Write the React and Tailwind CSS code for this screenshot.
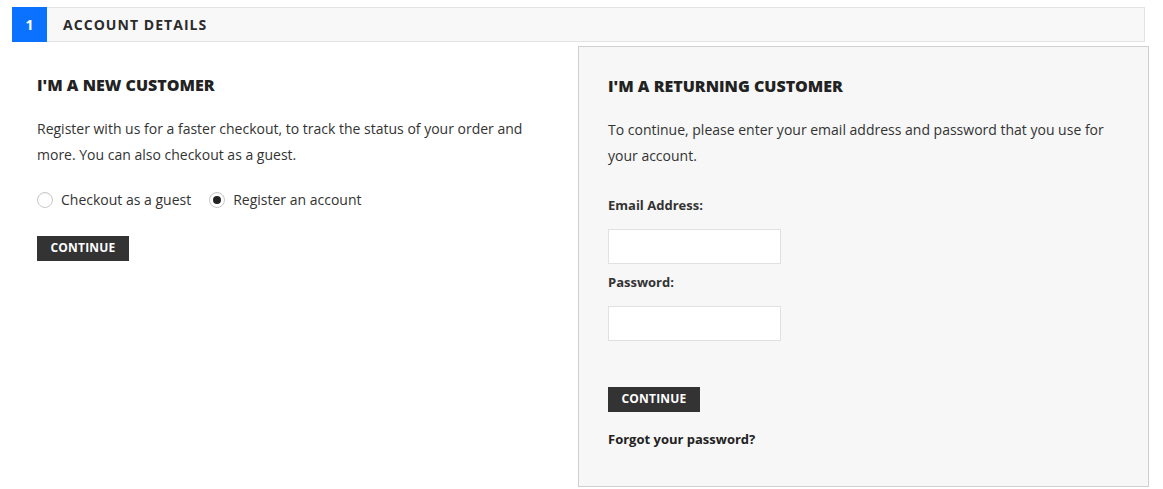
import React from 'react';

const font = { fontFamily: '"Open Sans", Arial, sans-serif' };

function Radio({ checked, label }) {
  return (
    <label className="flex items-center gap-[8px] cursor-pointer">
      <span className="w-[16px] h-[16px] rounded-full border border-[#c8c8c8] bg-white flex items-center justify-center shadow-[inset_0_1px_1px_rgba(0,0,0,0.05)]">
        {checked && <span className="w-[8px] h-[8px] rounded-full bg-[#222]" />}
      </span>
      <span>{label}</span>
    </label>
  );
}

function DarkButton({ children }) {
  return (
    <button className="h-[25px] w-[92px] bg-[#333333] text-white text-[12px] font-bold tracking-[0.2px] uppercase">
      {children}
    </button>
  );
}

export default function App() {
  return (
    <div className="bg-white text-[#333] w-[1163px] h-[489px] px-[12px] pt-[7px]" style={font}>
      {/* step header */}
      <div className="flex h-[35px] w-[1133px] border border-[#e3e3e3] bg-[#f8f8f8]">
        <div className="w-[35px] -ml-px -mt-px h-[35px] bg-[#0a72ff] text-white text-[14px] font-bold flex items-center justify-center">
          1
        </div>
        <div className="pl-[16px] flex items-center text-[14px] font-bold tracking-[1.05px] uppercase text-[#2b2b2b]">
          Account Details
        </div>
      </div>

      <div className="flex mt-[4px]">
        {/* new customer */}
        <div className="w-[566px] pl-[25px] pt-[28px]">
          <h2 className="text-[16px] font-extrabold uppercase leading-[22px] text-[#222]">I'm a new customer</h2>
          <p className="text-[14px] leading-[26px] mt-[20px] pr-[30px]">
            Register with us for a faster checkout, to track the status of your order and more. You can also checkout as a guest.
          </p>
          <div className="flex items-center gap-[18px] text-[14px] mt-[21px]">
            <Radio label="Checkout as a guest" />
            <Radio checked label="Register an account" />
          </div>
          <div className="mt-[24px]">
            <DarkButton>Continue</DarkButton>
          </div>
        </div>

        {/* returning customer */}
        <div className="w-[571px] h-[441px] border border-[#cfcfcf] bg-[#f7f7f7] pl-[29px] pt-[28px]">
          <h2 className="text-[16px] font-extrabold uppercase leading-[22px] text-[#222]">I'm a returning customer</h2>
          <p className="text-[14px] leading-[26px] mt-[20px] pr-[40px]">
            To continue, please enter your email address and password that you use for your account.
          </p>
          <div className="text-[13px] font-bold mt-[27px] leading-[18px]">Email Address:</div>
          <input type="email" className="block mt-[15px] w-[173px] h-[35px] bg-white border border-[#e1e1e1] outline-none" />
          <div className="text-[13px] font-bold mt-[9px] leading-[18px]">Password:</div>
          <input type="password" className="block mt-[15px] w-[173px] h-[35px] bg-white border border-[#e1e1e1] outline-none" />
          <div className="mt-[44px]">
            <DarkButton>Continue</DarkButton>
          </div>
          <a href="#" className="block text-[13px] font-bold mt-[18px] leading-[18px] text-[#222]">Forgot your password?</a>
        </div>
      </div>
    </div>
  );
}
